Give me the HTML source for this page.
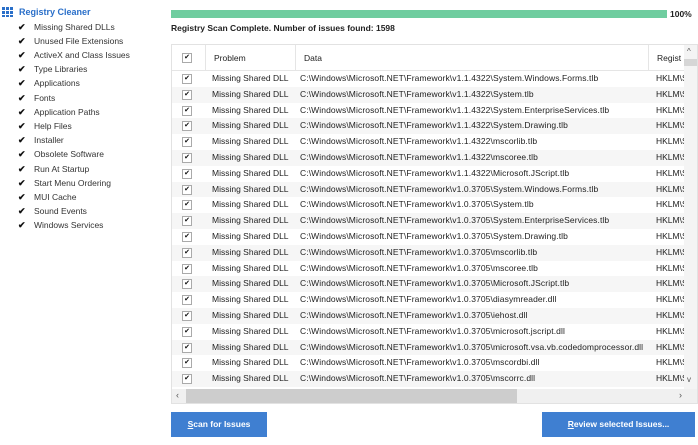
<!DOCTYPE html>
<html><head><style>
*{margin:0;padding:0;box-sizing:border-box}
body{width:698px;height:445px;background:#fff;font-family:"Liberation Sans",sans-serif;font-size:8.5px;color:#222;position:relative;overflow:hidden}
.left{position:absolute;left:0;top:0;width:166px;height:445px;background:#fff}
.title{position:absolute;left:19px;top:7px;color:#2a6fc9;font-weight:bold;font-size:9px}
.grid{position:absolute;left:2px;top:7px;width:11px;height:10px;background:
linear-gradient(90deg,#2a6fc9 3px,transparent 3px,transparent 4px,#2a6fc9 4px,#2a6fc9 7px,transparent 7px,transparent 8px,#2a6fc9 8px);}
.grid:before{content:"";position:absolute;left:0;right:0;top:3px;height:1px;background:#fff;box-shadow:0 4px 0 #fff}
.item{position:absolute;left:20px;height:14px;line-height:14px;font-size:8.5px;color:#333}
.item b{position:absolute;left:-2px;font-size:9px;color:#111}
.item span{position:absolute;left:14px;white-space:nowrap}
.prog{position:absolute;left:171px;top:10px;width:496px;height:8px;background:#6fcd9f}
.pct{position:absolute;left:670px;top:9px;font-weight:bold;font-size:8.5px}
.status{position:absolute;left:171px;top:23px;font-weight:bold;font-size:8.5px}
.table{position:absolute;left:171px;top:44px;width:527px;height:360px;border:1px solid #e2e2e2;background:#fff;overflow:hidden}
.hdr{position:absolute;left:0;top:0;width:513px;height:26px;border-bottom:1px solid #e5e5e5}
.hdr div{position:absolute;top:0;height:26px;line-height:26px;border-right:1px solid #e5e5e5}
.row{position:absolute;left:0;width:513px;height:15.8px;line-height:15.8px;white-space:nowrap;overflow:hidden}
.row.alt{background:#f6f6f6}
.cb{position:absolute;left:10px;width:10px;height:10px;border:1px solid #aaa;background:#fff;font-size:7px;line-height:8px;text-align:center;color:#111}
.c1{position:absolute;left:40px}.c2{position:absolute;left:128px;letter-spacing:0.1px}.c3{position:absolute;left:484px}
.vs{position:absolute;right:0;top:0;width:13px;height:345px;background:#f4f4f4}
.hs{position:absolute;left:0;bottom:0;width:527px;height:14px;background:#f0f0f0}
.btn{position:absolute;top:412px;height:25px;background:#3f7fd1;color:#fff;font-weight:bold;font-size:8.5px;line-height:25px;text-align:center}
</style></head><body>
<div class="left">
<div class="grid"></div>
<div class="title">Registry Cleaner</div>
<div class="item" style="top:20px"><b>✔</b><span>Missing Shared DLLs</span></div>
<div class="item" style="top:34px"><b>✔</b><span>Unused File Extensions</span></div>
<div class="item" style="top:48px"><b>✔</b><span>ActiveX and Class Issues</span></div>
<div class="item" style="top:62px"><b>✔</b><span>Type Libraries</span></div>
<div class="item" style="top:76px"><b>✔</b><span>Applications</span></div>
<div class="item" style="top:91px"><b>✔</b><span>Fonts</span></div>
<div class="item" style="top:105px"><b>✔</b><span>Application Paths</span></div>
<div class="item" style="top:119px"><b>✔</b><span>Help Files</span></div>
<div class="item" style="top:133px"><b>✔</b><span>Installer</span></div>
<div class="item" style="top:147px"><b>✔</b><span>Obsolete Software</span></div>
<div class="item" style="top:162px"><b>✔</b><span>Run At Startup</span></div>
<div class="item" style="top:176px"><b>✔</b><span>Start Menu Ordering</span></div>
<div class="item" style="top:190px"><b>✔</b><span>MUI Cache</span></div>
<div class="item" style="top:204px"><b>✔</b><span>Sound Events</span></div>
<div class="item" style="top:218px"><b>✔</b><span>Windows Services</span></div>
</div>
<div class="prog"></div>
<div class="pct">100%</div>
<div class="status">Registry Scan Complete. Number of issues found: 1598</div>
<div class="table">
<div class="hdr">
<div style="left:0;width:34px"><span class="cb" style="top:8px">✔</span></div>
<div style="left:34px;width:90px;padding-left:8px">Problem</div>
<div style="left:124px;width:353px;padding-left:8px">Data</div>
<div style="left:477px;width:40px;padding-left:8px;border:none">Regist</div>
</div>
<div id="rows"></div>
<div class="vs"><div style="position:absolute;top:2px;left:3px;font-size:8px;color:#555">^</div><div style="position:absolute;top:14px;left:0;width:13px;height:7px;background:#d6d6d6"></div><div style="position:absolute;top:330px;left:3px;font-size:8px;color:#555">v</div></div>
<div class="hs"><div style="position:absolute;left:4px;top:1px;font-size:9px;color:#555">‹</div><div style="position:absolute;left:14px;top:0;width:331px;height:14px;background:#cdcdcd"></div><div style="position:absolute;left:507px;top:1px;font-size:9px;color:#555">›</div></div>
</div>
<div class="btn" style="left:171px;width:96px"><u>S</u>can for Issues</div>
<div class="btn" style="left:542px;width:153px"><u>R</u>eview selected Issues...</div>
<script>
var d=["v1.1.4322\\System.Windows.Forms.tlb","v1.1.4322\\System.tlb","v1.1.4322\\System.EnterpriseServices.tlb","v1.1.4322\\System.Drawing.tlb","v1.1.4322\\mscorlib.tlb","v1.1.4322\\mscoree.tlb","v1.1.4322\\Microsoft.JScript.tlb","v1.0.3705\\System.Windows.Forms.tlb","v1.0.3705\\System.tlb","v1.0.3705\\System.EnterpriseServices.tlb","v1.0.3705\\System.Drawing.tlb","v1.0.3705\\mscorlib.tlb","v1.0.3705\\mscoree.tlb","v1.0.3705\\Microsoft.JScript.tlb","v1.0.3705\\diasymreader.dll","v1.0.3705\\iehost.dll","v1.0.3705\\microsoft.jscript.dll","v1.0.3705\\microsoft.vsa.vb.codedomprocessor.dll","v1.0.3705\\mscordbi.dll","v1.0.3705\\mscorrc.dll","v1.0.3705\\mscorsec.dll"];
var h="";for(var i=0;i<d.length;i++){var t=26+i*15.8;h+='<div class="row'+(i%2?' alt':'')+'" style="top:'+t+'px"><span class="cb" style="top:3px">✔</span><span class="c1">Missing Shared DLL</span><span class="c2">C:\\Windows\\Microsoft.NET\\Framework\\'+d[i]+'</span><span class="c3">HKLM\\S</span></div>';}
document.getElementById("rows").innerHTML=h;
</script>
</body></html>
